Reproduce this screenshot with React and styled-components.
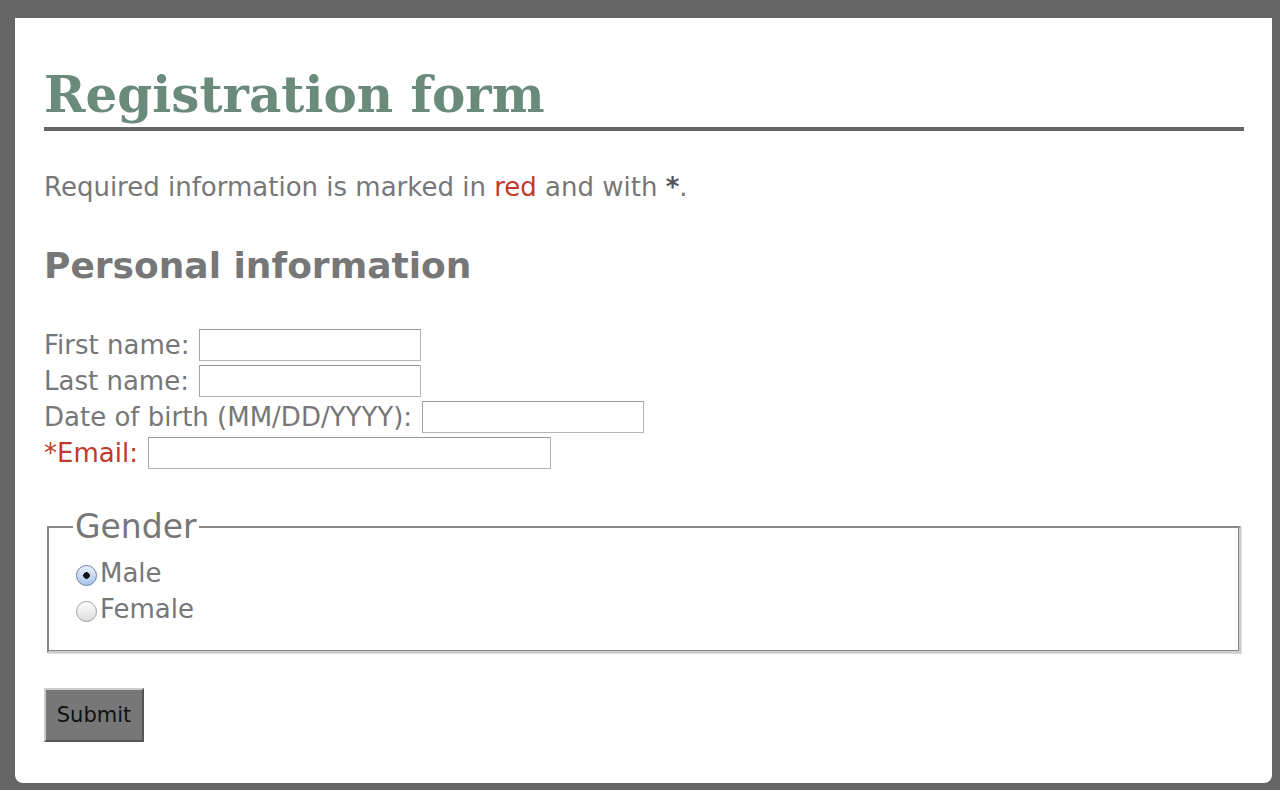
import React from "react";
import styled, { createGlobalStyle } from "styled-components";

const Global = createGlobalStyle`
  html, body { margin: 0; padding: 0; background: #666666; }
  body { width: 1280px; height: 790px; overflow: hidden; }
`;

const Frame = styled.div`
  padding: 18px 8px 7px 15px;
  height: 790px;
  box-sizing: border-box;
  display: flex;
`;

const Panel = styled.div`
  flex: 1;
  background: #ffffff;
  border-radius: 0 0 8px 8px;
  padding: 47px 28px 0 29px;
  box-sizing: border-box;
  font-family: "DejaVu Sans", sans-serif;
  color: #777777;
`;

const Title = styled.h1`
  margin: 0;
  font-family: "DejaVu Serif", Georgia, serif;
  font-weight: bold;
  font-size: 50px;
  line-height: 60px;
  color: #6a8a7c;
  border-bottom: 4px solid #666666;
  padding-bottom: 2px;
`;

const Note = styled.p`
  margin: 40px 0 0;
  font-size: 26px;
  line-height: 32px;
`;

const Red = styled.span`
  color: #c0392b;
`;

const Dark = styled.span`
  color: #555555;
  font-weight: bold;
`;

const Section = styled.h2`
  margin: 38px 0 0;
  font-size: 36px;
  line-height: 50px;
  font-weight: bold;
`;

const Fields = styled.div`
  margin-top: 38px;
  display: flex;
  flex-direction: column;
  gap: 4px;
`;

const Row = styled.label`
  display: flex;
  align-items: center;
  gap: 10px;
  font-size: 26px;
  height: 32px;
  color: ${(p) => (p.$required ? "#c0392b" : "#777777")};
`;

const Input = styled.input`
  box-sizing: border-box;
  width: ${(p) => p.$w || 222}px;
  height: 32px;
  border: 1px solid #b5b5b5;
  border-top-color: #999;
  border-left-color: #a5a5a5;
  background: #fff;
  margin: 0;
  padding: 2px 4px;
`;

const Fieldset = styled.fieldset`
  margin: 38px 3px 0 3px;
  padding: 8px 26px 24px 27px;
  border-color: #888 #ccc #ccc #888;
  border-style: solid;
  border-width: 2px;
  box-shadow: inset -1px -1px 0 #888, 1px 1px 0 #ddd;
`;

const Legend = styled.legend`
  font-size: 33px;
  line-height: 40px;
  padding: 0 2px;
  margin-left: -3px;
  color: #777777;
`;

const RadioRow = styled.label`
  display: flex;
  align-items: center;
  font-size: 26px;
  height: 36px;
`;

const RadioDot = styled.span`
  width: 21px;
  height: 21px;
  border-radius: 50%;
  box-sizing: border-box;
  border: 1px solid ${(p) => (p.$checked ? "#6a7fa8" : "#a0a0a0")};
  background: ${(p) =>
    p.$checked
      ? "radial-gradient(circle at 50% 50%, #111 0 3px, transparent 3.5px), linear-gradient(#e8f0fb, #a9c3ea)"
      : "linear-gradient(#fdfdfd, #dcdcdc)"};
  margin: 5px 3px 0 0;
  flex: none;
`;

const Submit = styled.button`
  margin-top: 35px;
  width: 100px;
  height: 54px;
  background: #777777;
  border: 2px solid;
  border-color: #cccccc #555555 #555555 #cccccc;
  font-family: "DejaVu Sans", sans-serif;
  font-size: 21px;
  color: #111111;
  padding: 0;
`;

export default function App() {
  return (
    <>
      <Global />
      <Frame>
        <Panel>
          <Title>Registration form</Title>
          <Note>
            Required information is marked in <Red>red</Red> and with <Dark>*</Dark>.
          </Note>
          <Section>Personal information</Section>
          <Fields>
            <Row>First name:<Input /></Row>
            <Row>Last name:<Input /></Row>
            <Row>Date of birth (MM/DD/YYYY):<Input /></Row>
            <Row $required>*Email:<Input $w={403} /></Row>
          </Fields>
          <Fieldset>
            <Legend>Gender</Legend>
            <RadioRow><RadioDot $checked />Male</RadioRow>
            <RadioRow><RadioDot />Female</RadioRow>
          </Fieldset>
          <Submit>Submit</Submit>
        </Panel>
      </Frame>
    </>
  );
}
